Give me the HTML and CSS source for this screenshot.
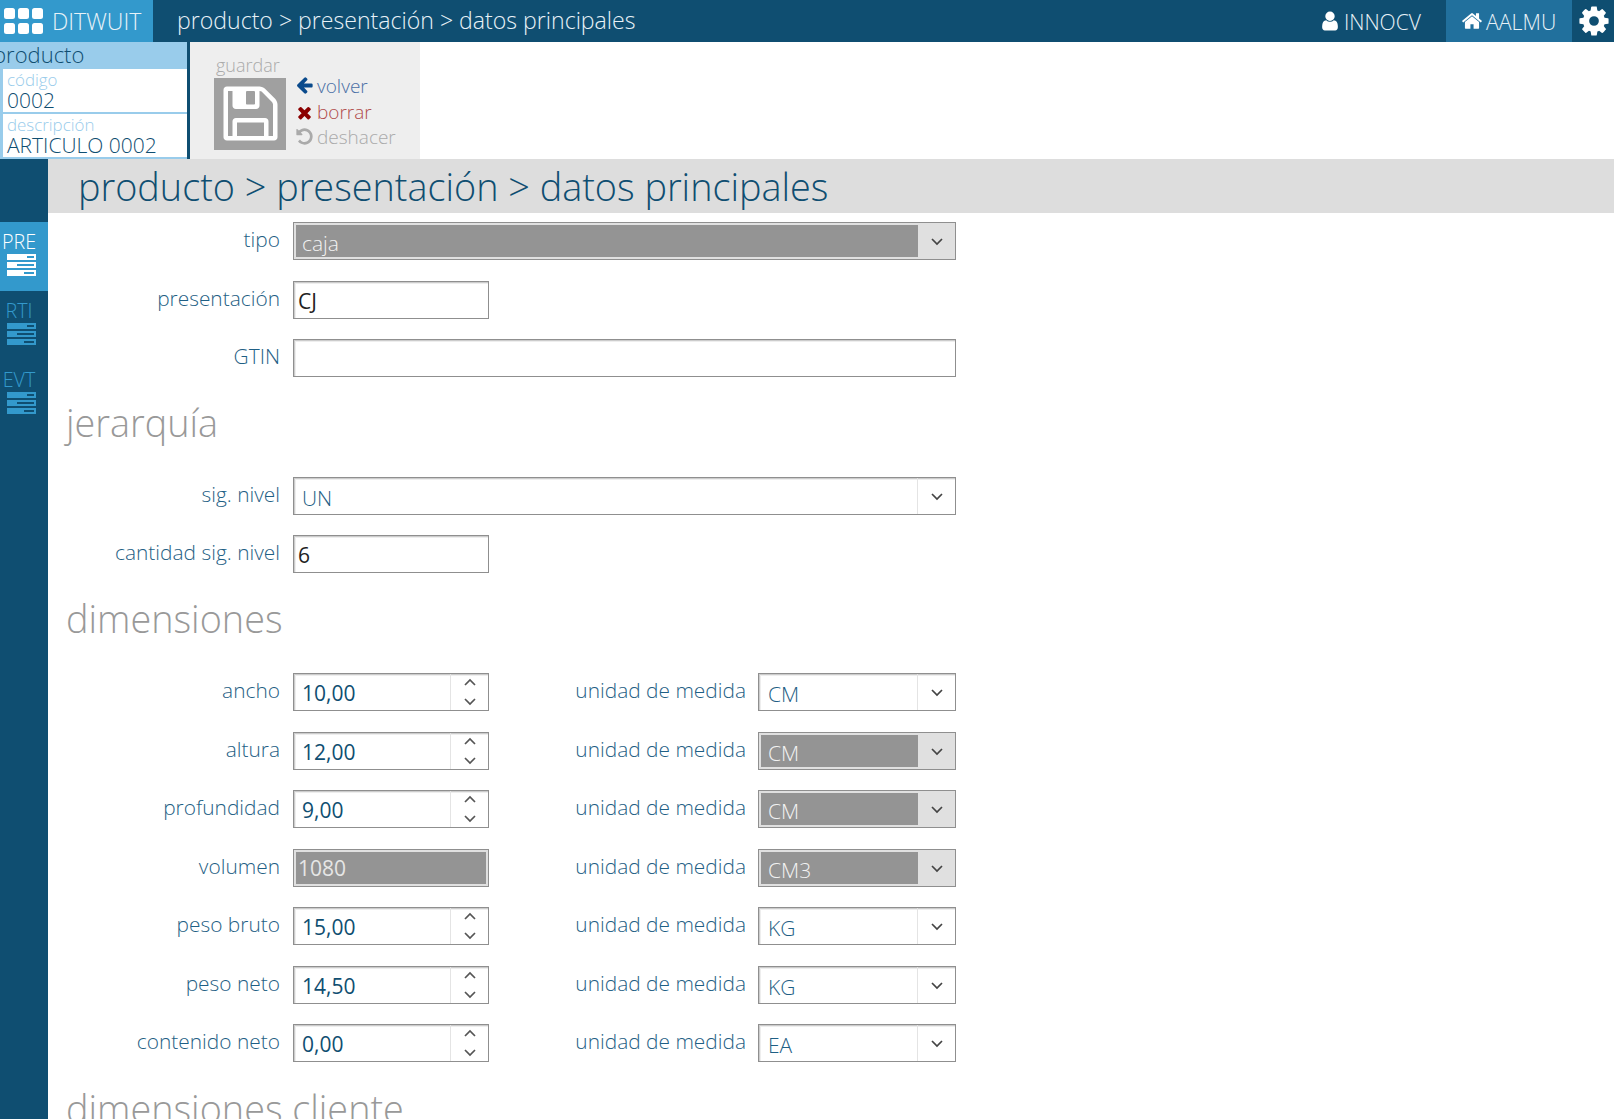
FILE: index.html
```html
<!DOCTYPE html>
<html lang="es">
<head>
<meta charset="UTF-8">
<meta name="viewport" content="width=device-width, initial-scale=1.0">
<title>producto > presentación > datos principales</title>
<link rel="stylesheet" href="styles.css">
</head>
<body>
<svg class="defs" width="0" height="0">
    <symbol id="i-user" viewBox="0 0 1792 1792"><path d="M1536 1399q0 109-62.500 187t-150.500 78h-854q-88 0-150.500-78t-62.500-187q0-85 8.500-160.500t31.500-152 58.500-131 94-89 134.500-34.500q131 128 313 128t313-128q76 0 134.500 34.500t94 89 58.500 131 31.500 152 8.500 160.500zm-256-887q0 159-112.500 271.500t-271.500 112.500-271.500-112.500-112.500-271.500 112.500-271.500 271.500-112.500 271.500 112.500 112.500 271.500z"/></symbol>
    <symbol id="i-home" viewBox="0 0 1792 1792"><path d="M1472 992v480q0 26-19 45t-45 19h-384v-384h-256v384h-384q-26 0-45-19t-19-45v-480q0-1 .5-3t.5-3l575-474 575 474q1 2 1 6zm223-69l-62 74q-8 9-21 11h-3q-13 0-21-7l-692-577-692 577q-12 8-24 7-13-2-21-11l-62-74q-8-10-7-23.500t11-21.500l719-599q32-26 76-26t76 26l244 204v-195q0-14 9-23t23-9h192q14 0 23 9t9 23v408l219 182q10 8 11 21.500t-7 23.500z"/></symbol>
    <symbol id="i-cog" viewBox="0 0 1792 1792"><path d="M1152 896q0-106-75-181t-181-75-181 75-75 181 75 181 181 75 181-75 75-181zm512-109v222q0 12-8 23t-20 13l-185 28q-19 54-39 91 35 50 107 138 10 12 10 25t-9 23q-27 37-99 108t-94 71q-12 0-26-9l-138-108q-44 23-91 38-16 136-29 186-7 28-36 28h-222q-14 0-24.500-8.500t-11.500-21.500l-28-184q-49-16-90-37l-141 107q-10 9-25 9-14 0-25-11-126-114-165-168-7-10-7-23 0-12 8-23 15-21 51-66.500t54-70.500q-27-50-41-99l-183-27q-13-2-21-12.500t-8-23.500v-222q0-12 8-23t19-13l186-28q14-46 39-92-40-57-107-138-10-12-10-24 0-10 9-23 26-36 98.500-107.500t94.500-71.500q13 0 26 10l138 107q44-23 91-38 16-136 29-186 7-28 36-28h222q14 0 24.500 8.500t11.500 21.500l28 184q49 16 90 37l142-107q9-9 24-9 13 0 25 10 129 119 165 170 7 8 7 22 0 12-8 23-15 21-51 66.500t-54 70.500q26 50 41 98l183 28q13 2 21 12.500t8 23.500z"/></symbol>
    <symbol id="i-save" viewBox="0 0 1792 1792"><path d="M512 1536h768v-384h-768v384zm896 0h128v-896q0-14-10-38.500t-20-34.500l-281-281q-10-10-34-20t-39-10v416q0 40-28 68t-68 28h-576q-40 0-68-28t-28-68v-416h-128v1280h128v-416q0-40 28-68t68-28h832q40 0 68 28t28 68v416zm-384-928v-320q0-13-9.500-22.500t-22.500-9.500h-192q-13 0-22.500 9.500t-9.500 22.500v320q0 13 9.500 22.500t22.500 9.500h192q13 0 22.500-9.500t9.500-22.500zm640 32v928q0 40-28 68t-68 28h-1344q-40 0-68-28t-28-68v-1344q0-40 28-68t68-28h928q40 0 88 20t76 48l280 280q28 28 48 76t20 88z"/></symbol>
    <symbol id="i-back" viewBox="0 0 1792 1792"><path d="M1664 896v128q0 53-32.500 90.500t-84.500 37.500h-704l293 294q38 36 38 90t-38 90l-75 76q-37 37-90 37-52 0-91-37l-651-652q-37-37-37-90 0-52 37-91l651-650q38-38 91-38 52 0 90 38l75 74q38 38 38 91t-38 91l-293 293h704q52 0 84.500 37.500t32.500 90.500z" transform="translate(0 -64)"/></symbol>
    <symbol id="i-del" viewBox="0 0 1792 1792"><path d="M1490 1322q0 40-28 68l-136 136q-28 28-68 28t-68-28l-294-294-294 294q-28 28-68 28t-68-28l-136-136q-28-28-28-68t28-68l294-294-294-294q-28-28-28-68t28-68l136-136q28-28 68-28t68 28l294 294 294-294q28-28 68-28t68 28l136 136q28 28 28 68t-28 68l-294 294 294 294q28 28 28 68z"/></symbol>
    <symbol id="i-undo" viewBox="0 0 1792 1792"><path d="M1664 896q0 156-61 298t-164 245-245 164-298 61q-172 0-327-72.500t-264-204.500q-7-10-6.500-22.500t8.500-20.500l137-138q10-9 25-9 16 2 23 12 73 95 179 147t225 52q104 0 198.500-40.500t163.500-109.500 109.500-163.500 40.500-198.500-40.500-198.500-109.500-163.500-163.500-109.500-198.500-40.500q-98 0-188 35.500t-160 101.500l137 138q31 30 14 69-17 40-59 40h-448q-26 0-45-19t-19-45v-448q0-42 40-59 39-17 69 14l130 129q107-101 244.500-156.500t284.500-55.500q156 0 298 61t245 164 164 245 61 298z"/></symbol>
    <symbol id="i-logo" viewBox="0 0 39 26"><rect x="0" y="0" width="11" height="11" rx="2.5"/><rect x="14" y="0" width="11" height="11" rx="2.5"/><rect x="28" y="0" width="11" height="11" rx="2.5"/><rect x="0" y="15" width="11" height="11" rx="2.5"/><rect x="14" y="15" width="11" height="11" rx="2.5"/><rect x="28" y="15" width="11" height="11" rx="2.5"/></symbol>
    <symbol id="i-server" viewBox="0 0 29 22"><path d="M0 0h29v6H0zM0 8h29v6H0zM0 16h29v6H0z"/><path class="ranura" d="M20 2h7v2h-7zM10 10h17v2H10zM17 18h10v2H17z"/></symbol>
    <symbol id="i-down" viewBox="0 0 14 9"><path d="M2 2l5 5 5-5" fill="none" stroke="currentColor" stroke-width="1.7"/></symbol>
    <symbol id="i-up" viewBox="0 0 14 9"><path d="M2 7l5-5 5 5" fill="none" stroke="currentColor" stroke-width="1.7"/></symbol>
</svg>

<header class="barra">
    <div class="marca"><svg class="marca-icono"><use href="#i-logo"/></svg><span>DITWUIT</span></div>
    <div class="ruta">producto &gt; presentación &gt; datos principales</div>
    <div class="usuario"><svg class="ico"><use href="#i-user"/></svg>INNOCV</div>
    <div class="almacen"><svg class="ico"><use href="#i-home"/></svg>AALMU</div>
    <div class="ajustes"><svg class="ico-cog"><use href="#i-cog"/></svg></div>
</header>

<section class="cabecera">
    <div class="ficha">
        <div class="ficha-titulo">producto</div>
        <div class="ficha-dato">
            <div class="ficha-label">código</div>
            <div class="ficha-valor">0002</div>
        </div>
        <div class="ficha-dato">
            <div class="ficha-label">descripción</div>
            <div class="ficha-valor">ARTICULO 0002</div>
        </div>
    </div>
    <div class="acciones">
        <div class="guardar">
            <div class="guardar-texto">guardar</div>
            <div class="guardar-boton"><svg><use href="#i-save"/></svg></div>
        </div>
        <div class="enlaces">
            <div class="enlace volver"><svg><use href="#i-back"/></svg>volver</div>
            <div class="enlace borrar"><svg><use href="#i-del"/></svg>borrar</div>
            <div class="enlace deshacer"><svg><use href="#i-undo"/></svg>deshacer</div>
        </div>
    </div>
</section>

<div class="cuerpo">
    <nav class="lateral">
        <div class="tab activa">PRE<svg><use href="#i-server"/></svg></div>
        <div class="tab">RTI<svg><use href="#i-server"/></svg></div>
        <div class="tab">EVT<svg><use href="#i-server"/></svg></div>
    </nav>
    <main class="contenido">
        <h1 class="titulo">producto &gt; presentación &gt; datos principales</h1>
        <form class="formulario">
            <div class="fila">
                <div class="etiqueta">tipo</div>
                <div class="campo combo ancho off"><span class="valor">caja</span><span class="flecha"><svg><use href="#i-down"/></svg></span></div>
            </div>
            <div class="fila">
                <div class="etiqueta">presentación</div>
                <div class="campo corto texto">CJ</div>
            </div>
            <div class="fila">
                <div class="etiqueta">GTIN</div>
                <div class="campo ancho texto"></div>
            </div>

            <h3 class="seccion jerarquia">jerarquía</h3>
            <div class="fila">
                <div class="etiqueta">sig. nivel</div>
                <div class="campo combo ancho"><span class="valor">UN</span><span class="flecha"><svg><use href="#i-down"/></svg></span></div>
            </div>
            <div class="fila">
                <div class="etiqueta">cantidad sig. nivel</div>
                <div class="campo corto texto">6</div>
            </div>

            <h3 class="seccion dimensiones">dimensiones</h3>
            <div class="fila">
                <div class="etiqueta">ancho</div>
                <div class="campo corto numero"><span class="valor">10,00</span><span class="giro"><svg><use href="#i-up"/></svg><svg><use href="#i-down"/></svg></span></div>
                <div class="etiqueta unidad">unidad de medida</div>
                <div class="campo combo medida"><span class="valor">CM</span><span class="flecha"><svg><use href="#i-down"/></svg></span></div>
            </div>
            <div class="fila">
                <div class="etiqueta">altura</div>
                <div class="campo corto numero"><span class="valor">12,00</span><span class="giro"><svg><use href="#i-up"/></svg><svg><use href="#i-down"/></svg></span></div>
                <div class="etiqueta unidad">unidad de medida</div>
                <div class="campo combo medida off"><span class="valor">CM</span><span class="flecha"><svg><use href="#i-down"/></svg></span></div>
            </div>
            <div class="fila">
                <div class="etiqueta">profundidad</div>
                <div class="campo corto numero"><span class="valor">9,00</span><span class="giro"><svg><use href="#i-up"/></svg><svg><use href="#i-down"/></svg></span></div>
                <div class="etiqueta unidad">unidad de medida</div>
                <div class="campo combo medida off"><span class="valor">CM</span><span class="flecha"><svg><use href="#i-down"/></svg></span></div>
            </div>
            <div class="fila">
                <div class="etiqueta">volumen</div>
                <div class="campo corto texto bloqueado">1080</div>
                <div class="etiqueta unidad">unidad de medida</div>
                <div class="campo combo medida off"><span class="valor">CM3</span><span class="flecha"><svg><use href="#i-down"/></svg></span></div>
            </div>
            <div class="fila">
                <div class="etiqueta">peso bruto</div>
                <div class="campo corto numero"><span class="valor">15,00</span><span class="giro"><svg><use href="#i-up"/></svg><svg><use href="#i-down"/></svg></span></div>
                <div class="etiqueta unidad">unidad de medida</div>
                <div class="campo combo medida"><span class="valor">KG</span><span class="flecha"><svg><use href="#i-down"/></svg></span></div>
            </div>
            <div class="fila">
                <div class="etiqueta">peso neto</div>
                <div class="campo corto numero"><span class="valor">14,50</span><span class="giro"><svg><use href="#i-up"/></svg><svg><use href="#i-down"/></svg></span></div>
                <div class="etiqueta unidad">unidad de medida</div>
                <div class="campo combo medida"><span class="valor">KG</span><span class="flecha"><svg><use href="#i-down"/></svg></span></div>
            </div>
            <div class="fila">
                <div class="etiqueta">contenido neto</div>
                <div class="campo corto numero"><span class="valor">0,00</span><span class="giro"><svg><use href="#i-up"/></svg><svg><use href="#i-down"/></svg></span></div>
                <div class="etiqueta unidad">unidad de medida</div>
                <div class="campo combo medida"><span class="valor">EA</span><span class="flecha"><svg><use href="#i-down"/></svg></span></div>
            </div>

            <h3 class="seccion cliente">dimensiones cliente</h3>
        </form>
    </main>
</div>
</body>
</html>
```

FILE: styles.css
```css
html, body {
    height: 100%;
}
body {
    margin: 0;
    height: 1119px;
    overflow: hidden;
    font-family: "Open Sans", "Noto Sans", sans-serif;
    font-weight: 300;
    background-color: #fff;
    color: #0f4e71;
}
.defs {
    position: absolute;
}

/* barra superior */
.barra {
    display: flex;
    align-items: stretch;
    height: 42px;
    background-color: #0f4e71;
    color: #e8f2f8;
    font-size: 23.1px;
    line-height: 41px;
}
.marca {
    display: flex;
    align-items: center;
    width: 153px;
    background-color: #3399cc;
}
.marca-icono {
    width: 39px;
    height: 26px;
    margin: 0 9px 0 4px;
    fill: #fff;
}
.ruta {
    flex: 1;
    margin-left: 24px;
}
.usuario {
    display: flex;
    align-items: center;
    padding-right: 25px;
    font-size: 21.1px;
}
.almacen {
    display: flex;
    align-items: center;
    width: 126px;
    box-sizing: border-box;
    padding-left: 15px;
    background-color: #21709d;
    font-size: 21.3px;
}
.ico {
    width: 22px;
    height: 22px;
    margin-right: 3px;
    fill: #fff;
}
.ajustes {
    display: flex;
    align-items: center;
    justify-content: center;
    width: 42px;
    padding-left: 1px;
    box-sizing: border-box;
}
.ico-cog {
    width: 34px;
    height: 34px;
    fill: #fff;
}

/* ficha y acciones */
.cabecera {
    display: flex;
    height: 117px;
}
.ficha {
    width: 187px;
    border-right: 3px solid #0f4e71;
    background-color: #99cceb;
    overflow: hidden;
}
.ficha-titulo {
    height: 27px;
    margin-left: -7px;
    font-size: 22px;
    line-height: 25px;
}
.ficha-dato {
    height: 43px;
    margin: 0 0 2px 3px;
    padding-left: 4px;
    background-color: #fff;
}
.ficha-label {
    height: 20px;
    color: #99cceb;
    font-size: 16.9px;
    line-height: 22px;
}
.ficha-valor {
    font-size: 21px;
    line-height: 22px;
}
.acciones {
    display: flex;
    width: 230px;
    box-sizing: border-box;
    padding: 12px 0 0 24px;
    background-color: #eee;
}
.guardar-texto {
    padding-left: 2px;
    color: #aaa;
    font-size: 18px;
    line-height: 22px;
    margin-bottom: 2px;
}
.guardar-boton {
    display: flex;
    align-items: center;
    justify-content: center;
    width: 72px;
    height: 72px;
    box-sizing: border-box;
    padding-bottom: 2px;
    background-color: #a0a0a0;
}
.guardar-boton svg {
    width: 63px;
    height: 63px;
    fill: #fff;
}
.enlaces {
    margin: 19px 0 0 10px;
}
.enlace {
    display: flex;
    align-items: center;
    height: 25.5px;
    font-size: 19px;
    white-space: nowrap;
}
.enlace svg {
    width: 19px;
    height: 19px;
    margin: 0 3px 0 -1px;
}
.volver {
    color: #4a6fa5;
}
.volver svg {
    fill: #0a4a8c;
}
.borrar {
    padding-top: 1px;
    color: #b04a4a;
}
.borrar svg {
    fill: #8b0000;
}
.deshacer {
    margin-top: -1px;
    color: #aaa;
}
.deshacer svg {
    fill: #aaa;
}

/* lateral */
.cuerpo {
    display: flex;
    height: 960px;
}
.lateral {
    width: 48px;
    padding-top: 63px;
    background-color: #0f4e71;
}
.tab {
    display: flex;
    flex-direction: column;
    align-items: center;
    height: 69px;
    padding: 8px 10px 0 0;
    box-sizing: border-box;
    color: #3399cc;
    font-size: 19.7px;
    line-height: 24px;
    --ranura: #0f4e71;
}
.tab svg {
    width: 29px;
    height: 22px;
    margin-left: 4px;
    fill: #3399cc;
}
.ranura {
    fill: var(--ranura);
}
.tab.activa {
    background-color: #3399cc;
    color: #fff;
    --ranura: #3399cc;
}
.tab.activa svg {
    fill: #fff;
}

/* contenido */
.contenido {
    flex: 1;
    min-width: 0;
}
.titulo {
    height: 54px;
    margin: 0;
    padding-left: 30px;
    background-color: #ddd;
    font-size: 37.8px;
    font-weight: 300;
    line-height: 56px;
}
.formulario {
    padding-top: 9px;
}
.fila {
    display: flex;
    align-items: flex-start;
    height: 38px;
    margin-bottom: 20.5px;
}
.etiqueta {
    width: 232px;
    margin-right: 13px;
    color: #1f5f85;
    font-size: 20.9px;
    line-height: 35px;
    text-align: right;
    white-space: nowrap;
}
.etiqueta.unidad {
    width: 257px;
    margin-right: 12px;
}
.campo {
    display: flex;
    height: 38px;
    box-sizing: border-box;
    border: 1px solid #8f8f8f;
    box-shadow: inset 1px 1px 0 #ccc, inset 2px 2px 0 #eee;
    background-color: #fff;
    font-size: 21px;
    line-height: 38px;
}
.ancho {
    width: 663px;
}
.corto {
    width: 196px;
}
.medida {
    width: 198px;
}
.texto {
    padding-left: 4px;
    color: #222;
    font-weight: 400;
}
.valor {
    flex: 1;
    padding-left: 8px;
}
.numero .valor {
    font-weight: 400;
}
.combo .valor {
    color: #1f5f85;
    font-weight: 300;
    line-height: 40px;
}
.medida .valor {
    padding-left: 9px;
}
.flecha {
    display: flex;
    align-items: center;
    justify-content: center;
    width: 37px;
    padding-top: 1px;
    border-left: 1px solid #e4e4e4;
    color: #444;
}
.flecha svg {
    width: 14px;
    height: 9px;
}
.giro {
    display: flex;
    flex-direction: column;
    align-items: center;
    justify-content: center;
    gap: 10px;
    width: 37px;
    border-left: 1px solid #e4e4e4;
    color: #555;
}
.giro svg {
    width: 14px;
    height: 9px;
}
.off {
    background-color: #e0e0e0;
    box-shadow: none;
}
.off .valor {
    margin: 2px 0 2px 2px;
    padding-left: 6px;
    background-color: #949494;
    color: #f2f2f2;
    line-height: 36px;
}
.medida.off .valor {
    padding-left: 7px;
}
.off .flecha {
    border-left: 0;
}
.bloqueado {
    padding-left: 4px;
    outline: 2px solid #e0e0e0;
    outline-offset: -3px;
    box-shadow: none;
    background-color: #949494;
    color: #e6e6e6;
    font-weight: 400;
    line-height: 36px;
}
.seccion {
    margin: 0;
    padding-left: 18px;
    color: #999;
    font-size: 37.8px;
    font-weight: 300;
}
.jerarquia {
    height: 79px;
    line-height: 50px;
}
.dimensiones {
    height: 79.5px;
    line-height: 50px;
}
.cliente {
    line-height: 51px;
}
```
